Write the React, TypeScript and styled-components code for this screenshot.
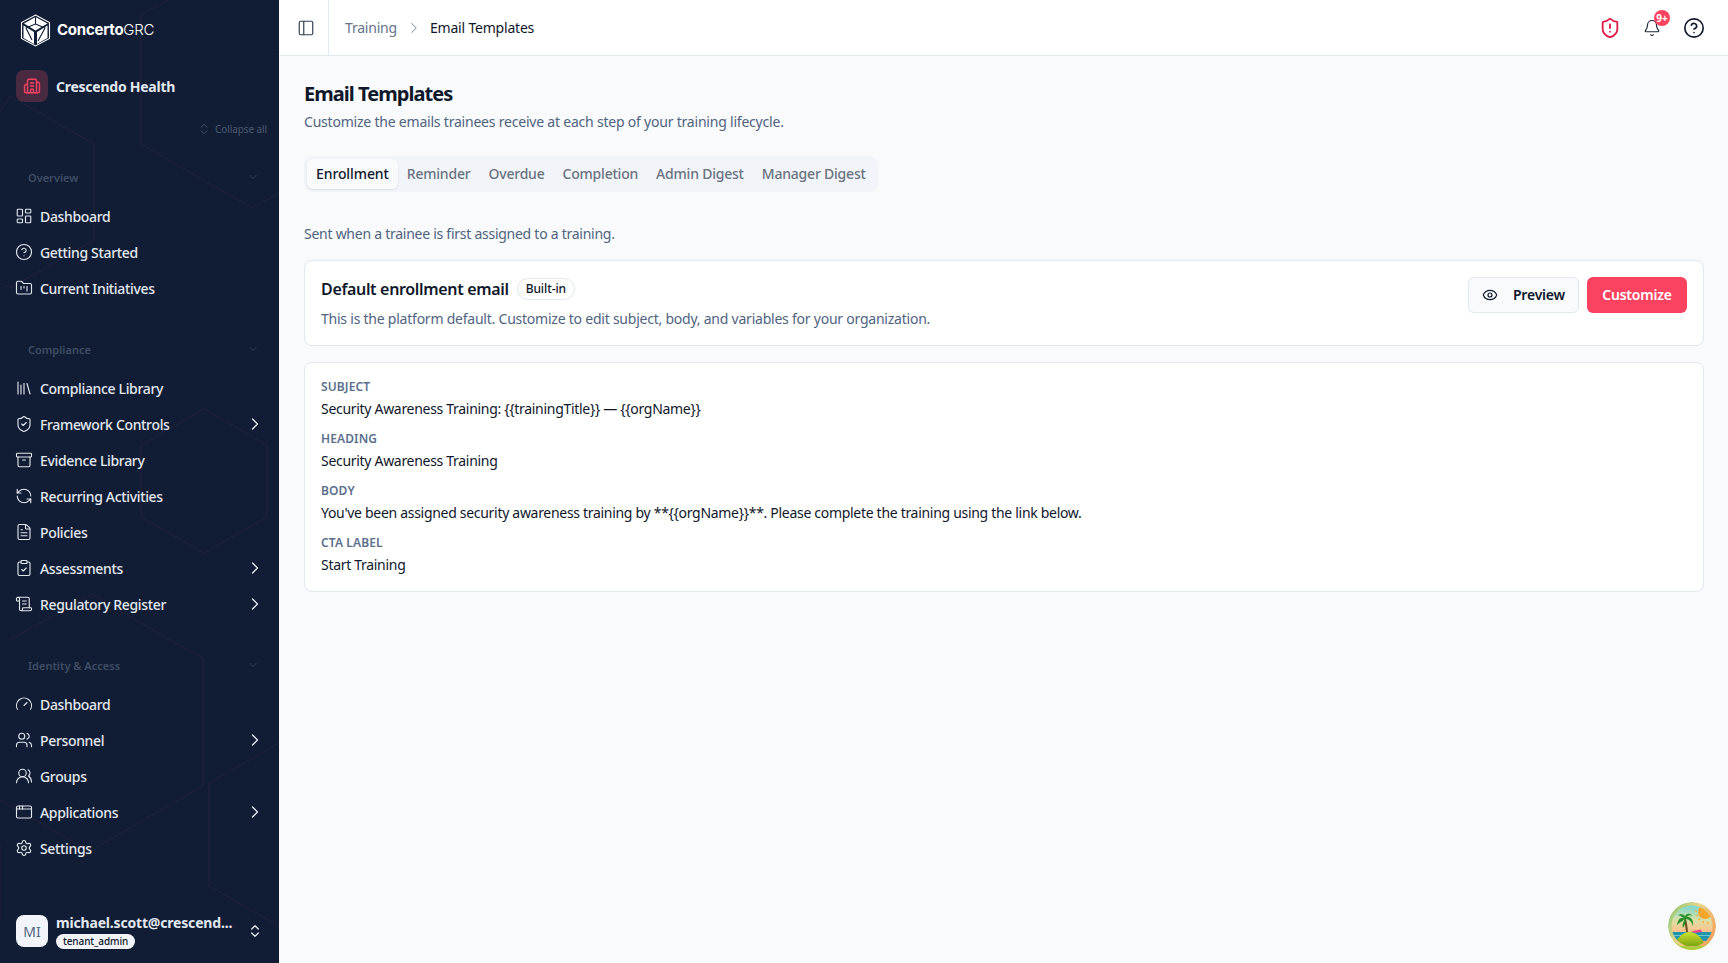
import React from "react";
import styled, { createGlobalStyle } from "styled-components";
import {
  LayoutDashboard, CircleHelp, FolderKanban, Library, ShieldCheck, Archive, RefreshCcw, FileText,
  ClipboardCheck, ScrollText, Gauge, Users, UsersRound, AppWindow, Settings, ChevronRight, ChevronDown,
  ChevronsUpDown, PanelLeft, ShieldAlert, Bell, Eye, Building2,
} from "lucide-react";

const FONT = `"Noto Sans", "Open Sans", sans-serif`;

const Global = createGlobalStyle`
  html, body { margin: 0; padding: 0; height: 100%; }
  body { font-family: ${FONT}; background: #f8fafc; color: #0f172a; overflow: hidden; }
  * { box-sizing: border-box; }
`;

const Shell = styled.div`position: relative; display: flex; width: 1728px; height: 963px; overflow: hidden;`;

const Sidebar = styled.aside`
  position: relative; flex: 0 0 279px; height: 963px; background: #111d34; color: #e2e8f0;
  display: flex; flex-direction: column; overflow: hidden;
`;
const HexLayer = styled.svg`position: absolute; inset: 0; width: 279px; height: 963px; pointer-events: none;`;
const SideInner = styled.div`position: relative; display: flex; flex-direction: column; height: 100%;`;
const Brand = styled.div`display: flex; align-items: center; gap: 6px; height: 60px; padding: 0 0 0 20px;`;
const BrandName = styled.div`padding-bottom: 2px; font-family: Inter, "Liberation Sans", sans-serif; font-size: 15px; letter-spacing: -0.25px; color: #fff; b { font-weight: 700; } span { font-weight: 300; }`;
const Org = styled.div`display: flex; align-items: center; gap: 8px; margin-top: 10px; padding: 0 16px; height: 32px;`;
const OrgChip = styled.div`width: 32px; height: 32px; border-radius: 8px; background: #4a2a41; color: #fb4361; display: flex; align-items: center; justify-content: center;`;
const OrgName = styled.div`font-size: 14px; font-weight: 700; letter-spacing: -0.25px; color: #e2e8f0;`;
const CollapseAll = styled.div`display: flex; justify-content: flex-end; align-items: center; gap: 4px; height: 14px; margin-top: 20px; padding-right: 12px; font-size: 10px; letter-spacing: -0.1px; color: #4b5a72;`;
const Section = styled.div<{ $gap: number }>`margin-top: ${(p) => p.$gap}px;`;
const SectionHead = styled.div`display: flex; align-items: center; justify-content: space-between; height: 20px; padding: 0 20px 0 28px; font-size: 11px; font-weight: 600; letter-spacing: 0; color: #3f4d65;`;
const NavList = styled.nav`display: flex; flex-direction: column; margin-top: 11px;`;
const NavRow = styled.div`display: flex; align-items: center; gap: 7px; height: 36px; padding: 0 14px 0 15px; font-size: 14px; font-weight: 500; letter-spacing: -0.34px; color: #e2e8f0;`;
const NavLabel = styled.span`flex: 1;`;
const UserRow = styled.div`margin-top: auto; margin-bottom: 16px; display: flex; align-items: center; gap: 8px; padding: 0 16px; height: 32px;`;
const Avatar = styled.div`width: 32px; height: 32px; border-radius: 8px; background: #f1f5f9; color: #526580; font-size: 14px; display: flex; align-items: center; justify-content: center;`;
const UserInfo = styled.div`flex: 1; min-width: 0; display: flex; flex-direction: column; align-items: flex-start;`;
const UserMail = styled.div`padding-bottom: 2px; font-size: 14px; font-weight: 700; line-height: 18px; letter-spacing: -0.18px; color: #e2e8f0; white-space: nowrap;`;
const RoleBadge = styled.div`background: #f1f5f9; color: #0f172a; border-radius: 8px; padding: 0 7px; font-size: 10px; font-weight: 500; line-height: 15px; letter-spacing: -0.1px;`;

const Main = styled.div`flex: 1; min-width: 0; display: flex; flex-direction: column;`;
const Topbar = styled.header`height: 56px; flex: 0 0 56px; background: #fff; border-bottom: 1px solid #e2e8f0; display: flex; align-items: center;`;
const ToggleCell = styled.div`width: 50px; height: 55px; padding-left: 5px; border-right: 1px solid #e2e8f0; display: flex; align-items: center; justify-content: center; color: #334155;`;
const Crumbs = styled.div`display: flex; align-items: center; gap: 8px; margin-left: 16px; font-size: 14px; letter-spacing: -0.2px;`;
const CrumbLink = styled.span`color: #64748b;`;
const CrumbNow = styled.span`color: #0f172a; margin-left: -1px;`;
const TopIcons = styled.div`margin-left: auto; display: flex; align-items: center; gap: 20px; padding-right: 23px;`;
const BellWrap = styled.div`position: relative; width: 22px; height: 22px; display: flex; align-items: center; justify-content: center; color: #1e293b;`;
const BellBadge = styled.span`position: absolute; top: -7px; right: -7px; min-width: 16px; height: 16px; border-radius: 8px; background: #fb4361; color: #fff; font-size: 10px; font-weight: 700; display: flex; align-items: center; justify-content: center;`;

const Content = styled.main`flex: 1; padding: 24px 24px 0 25px; background: #f8fafc;`;
const Title = styled.h1`margin: 0; font-size: 20px; font-weight: 700; line-height: 28px; letter-spacing: -0.95px; color: #0f172a;`;
const Subtitle = styled.p`margin: 4px 0 0; font-size: 14px; line-height: 20px; letter-spacing: -0.21px; color: #50637f;`;
const Tabs = styled.div`display: inline-flex; gap: 0; align-items: center; margin-top: 24px; height: 36px; padding: 3px; border-radius: 8px; background: #f1f5f9;`;
const TabItem = styled.div<{ $active?: boolean }>`
  height: 30px; padding: 0 9px 2px; display: flex; align-items: center; border-radius: 6px; font-size: 14px; font-weight: 500;
  letter-spacing: ${(p) => (p.$active ? "-0.1px" : "-0.21px")};
  color: ${(p) => (p.$active ? "#0f172a" : "#6b7280")};
  background: ${(p) => (p.$active ? "#f8fafc" : "transparent")};
  box-shadow: ${(p) => (p.$active ? "0 1px 2px rgba(15,23,42,.1)" : "none")};
`;
const Hint = styled.p`margin: 32px 0 0; font-size: 14px; line-height: 20px; letter-spacing: -0.26px; color: #50637f;`;
const Card = styled.section`background: #fff; border: 1px solid #e2e8f0; border-radius: 8px;`;
const HeadCard = styled(Card)`margin-top: 16px; height: 86px; padding: 16px; display: flex; justify-content: space-between; align-items: flex-start;`;
const HeadLeft = styled.div`display: flex; flex-direction: column; gap: 8px;`;
const HeadTitleRow = styled.div`display: flex; align-items: center; gap: 8px; height: 24px;`;
const HeadTitle = styled.div`font-size: 16px; font-weight: 600; letter-spacing: -0.33px; color: #0f172a;`;
const Pill = styled.span`border: 1px solid #e2e8f0; border-radius: 11px; padding: 0 8px 1px; height: 22px; display: flex; align-items: center; font-size: 12px; font-weight: 500; letter-spacing: -0.1px; color: #0f172a;`;
const HeadDesc = styled.div`font-size: 14px; line-height: 20px; letter-spacing: -0.23px; color: #50637f;`;
const Actions = styled.div`display: flex; gap: 8px;`;
const BaseBtn = styled.button`height: 36px; padding-bottom: 2px; border-radius: 6px; font-family: ${FONT}; font-size: 14px; font-weight: 600; letter-spacing: -0.2px; display: flex; align-items: center; cursor: pointer;`;
const GhostBtn = styled(BaseBtn)`width: 111px; padding-left: 13px; padding-right: 13px; justify-content: space-between; background: #f8fafc; color: #0f172a; border: 1px solid #e2e8f0;`;
const PrimaryBtn = styled(BaseBtn)`width: 100px; justify-content: center; background: #fb4361; color: #fff; border: 0;`;
const BodyCard = styled(Card)`margin-top: 16px; padding: 16px; display: flex; flex-direction: column; gap: 12px;`;
const Field = styled.div`display: flex; flex-direction: column; gap: 4px;`;
const FieldLabel = styled.div`font-size: 12px; font-weight: 600; line-height: 16px; letter-spacing: 0.12px; color: #5b6f8d;`;
const FieldValue = styled.div`font-size: 14px; line-height: 20px; letter-spacing: -0.3px; color: #0f172a;`;
const Fab = styled.div`position: absolute; right: 12px; bottom: 13px; width: 48px; height: 48px; border-radius: 50%; overflow: hidden;`;

const ICON = { size: 18, strokeWidth: 1.5 };
const overview = [
  { i: LayoutDashboard, t: "Dashboard" }, { i: CircleHelp, t: "Getting Started" }, { i: FolderKanban, t: "Current Initiatives" },
];
const compliance = [
  { i: Library, t: "Compliance Library" }, { i: ShieldCheck, t: "Framework Controls", c: true }, { i: Archive, t: "Evidence Library" },
  { i: RefreshCcw, t: "Recurring Activities" }, { i: FileText, t: "Policies" }, { i: ClipboardCheck, t: "Assessments", c: true },
  { i: ScrollText, t: "Regulatory Register", c: true },
];
const identity = [
  { i: Gauge, t: "Dashboard" }, { i: Users, t: "Personnel", c: true }, { i: UsersRound, t: "Groups" },
  { i: AppWindow, t: "Applications", c: true }, { i: Settings, t: "Settings" },
];
const fields = [
  ["SUBJECT", "Security Awareness Training: {{trainingTitle}} — {{orgName}}"],
  ["HEADING", "Security Awareness Training"],
  ["BODY", "You've been assigned security awareness training by **{{orgName}}**. Please complete the training using the link below."],
  ["CTA LABEL", "Start Training"],
];

type Item = { i: React.ComponentType<any>; t: string; c?: boolean };
const Nav = ({ items }: { items: Item[] }) => (
  <NavList>
    {items.map(({ i: I, t, c }) => (
      <NavRow key={t}>
        <I {...ICON} />
        <NavLabel>{t}</NavLabel>
        {c && <ChevronRight size={20} strokeWidth={1.6} />}
      </NavRow>
    ))}
  </NavList>
);

const Head = ({ t }: { t: string }) => (
  <SectionHead>{t}<ChevronDown size={12} color="#33415a" /></SectionHead>
);

const Logo = () => (
  <svg width="31" height="33" viewBox="0 0 31 33" fill="none">
    <path d="M15.5 1 29.5 8.5V24.5L15.5 32 1.5 24.5V8.5Z" stroke="#fff" strokeWidth="1.1" />
    <path d="M15.5 3 4 9.5 15.5 16.5 27.5 9.5Z" fill="#fff" />
    <path d="M3.5 11.5 14 18V30L3.5 24Z" fill="#fff" />
    <path d="M27.5 11.5 17 18V30L27.5 24Z" fill="#fff" />
    <path d="M15.5 3 15.5 10 6 14 12 26M15.5 10 25 14 18 27" stroke="#111d34" strokeWidth="1.1" />
  </svg>
);

const Beach = () => (
  <svg width="48" height="48" viewBox="0 0 48 48">
    <defs>
      <linearGradient id="sky" x1="0" y1="0" x2="0" y2="1">
        <stop offset="0" stopColor="#77d6d2" /><stop offset=".35" stopColor="#d8e0a6" /><stop offset=".6" stopColor="#fbc68f" /><stop offset=".8" stopColor="#fb9f86" />
      </linearGradient>
      <linearGradient id="ring" x1="0" y1="0" x2="1" y2=".6">
        <stop offset="0" stopColor="#7fc76f" /><stop offset=".5" stopColor="#e6d58a" /><stop offset="1" stopColor="#f5a55f" />
      </linearGradient>
      <linearGradient id="hill" x1="0" y1="0" x2="0" y2="1">
        <stop offset="0" stopColor="#cfe02c" /><stop offset="1" stopColor="#7ba514" />
      </linearGradient>
      <clipPath id="inner"><circle cx="24" cy="24" r="20.5" /></clipPath>
    </defs>
    <circle cx="24" cy="24" r="24" fill="url(#ring)" />
    <path d="M4 38 A24 24 0 0 0 44 38 L36 44 L12 44Z" fill="#a9cf3a" />
    <g clipPath="url(#inner)">
      <rect x="3" y="3" width="42" height="42" fill="url(#sky)" />
      <circle cx="37" cy="10" r="7" fill="#f9a52a" />
      <path d="M27 9 29 9.5M28 14 30 13M30.5 18 32 16.5M35 21 35.5 19M40 22 39.5 20" stroke="#f6a53c" strokeWidth="1.2" />
      <rect x="3" y="30" width="42" height="9" fill="#1f96ac" />
      <rect x="3" y="33" width="42" height="1" fill="#6fc6cf" />
      <path d="M19 30 C18.5 25 18 21 17 17" stroke="#6b4a1f" strokeWidth="2" fill="none" />
      <path d="M17 17 C13 14 10 17 9 23 C12 20 15 19 17 17 C15 20 14 23 15 26 C17 23 18 20 18 17 C21 17 24 20 25 24 C26 19 23 14 18 15 C21 13 23 13 25 14 C22 11 19 11 17 14 C15 12 12 12 10 13 C13 14 15 15 17 17Z" fill="#2c8f2c" />
      <path d="M24 29 L33 27.5 L34 30 L26 31Z" fill="#ea4a8c" />
      <path d="M6 44 C10 34 16 30 21 30 C28 30 34 35 37 44Z" fill="url(#hill)" />
    </g>
  </svg>
);

export default function App() {
  return (
    <Shell>
      <Global />
      <Sidebar>
        <HexLayer viewBox="0 0 279 963" fill="none" stroke="#2a2740" strokeWidth="1" opacity=".6">
          <path d="M168 0 141 15V144L252 208 279 193" />
          <path d="M0 112 10 96 94 144V240L10 288 0 283" />
          <path d="M204 409 267 445V517L204 553 141 517V445Z" />
          <path d="M10 640 92 594 170 640 203 658V786L90 851 0 800" />
          <path d="M279 743 209 783V886L279 926" />
          <path d="M0 843V920" />
        </HexLayer>
        <SideInner>
          <Brand><Logo /><BrandName><b>Concerto</b><span>GRC</span></BrandName></Brand>
          <Org><OrgChip><Building2 size={18} strokeWidth={1.8} /></OrgChip><OrgName>Crescendo Health</OrgName></Org>
          <CollapseAll><ChevronsUpDown size={14} strokeWidth={1.5} />Collapse all</CollapseAll>
          <Section $gap={31}><Head t="Overview" /><Nav items={overview} /></Section>
          <Section $gap={33}><Head t="Compliance" /><Nav items={compliance} /></Section>
          <Section $gap={33}><Head t="Identity &amp; Access" /><Nav items={identity} /></Section>
          <UserRow>
            <Avatar>MI</Avatar>
            <UserInfo><UserMail>michael.scott@crescend...</UserMail><RoleBadge>tenant_admin</RoleBadge></UserInfo>
            <ChevronsUpDown size={16} />
          </UserRow>
        </SideInner>
      </Sidebar>
      <Main>
        <Topbar>
          <ToggleCell><PanelLeft size={18} strokeWidth={1.6} /></ToggleCell>
          <Crumbs><CrumbLink>Training</CrumbLink><ChevronRight size={18} color="#64748b" strokeWidth={1.2} /><CrumbNow>Email Templates</CrumbNow></Crumbs>
          <TopIcons>
            <ShieldAlert size={22} color="#e11d48" strokeWidth={2} />
            <BellWrap><Bell size={18} strokeWidth={1.6} /><BellBadge>9+</BellBadge></BellWrap>
            <CircleHelp size={22} color="#0f172a" strokeWidth={1.8} />
          </TopIcons>
        </Topbar>
        <Content>
          <Title>Email Templates</Title>
          <Subtitle>Customize the emails trainees receive at each step of your training lifecycle.</Subtitle>
          <Tabs>
            <TabItem $active>Enrollment</TabItem>
            {["Reminder", "Overdue", "Completion", "Admin Digest", "Manager Digest"].map((t) => <TabItem key={t}>{t}</TabItem>)}
          </Tabs>
          <Hint>Sent when a trainee is first assigned to a training.</Hint>
          <HeadCard>
            <HeadLeft>
              <HeadTitleRow><HeadTitle>Default enrollment email</HeadTitle><Pill>Built-in</Pill></HeadTitleRow>
              <HeadDesc>This is the platform default. Customize to edit subject, body, and variables for your organization.</HeadDesc>
            </HeadLeft>
            <Actions>
              <GhostBtn><Eye size={16} strokeWidth={1.8} />Preview</GhostBtn>
              <PrimaryBtn>Customize</PrimaryBtn>
            </Actions>
          </HeadCard>
          <BodyCard>
            {fields.map(([l, v]) => (
              <Field key={l}><FieldLabel>{l}</FieldLabel><FieldValue>{v}</FieldValue></Field>
            ))}
          </BodyCard>
        </Content>
      </Main>
      <Fab><Beach /></Fab>
    </Shell>
  );
}
